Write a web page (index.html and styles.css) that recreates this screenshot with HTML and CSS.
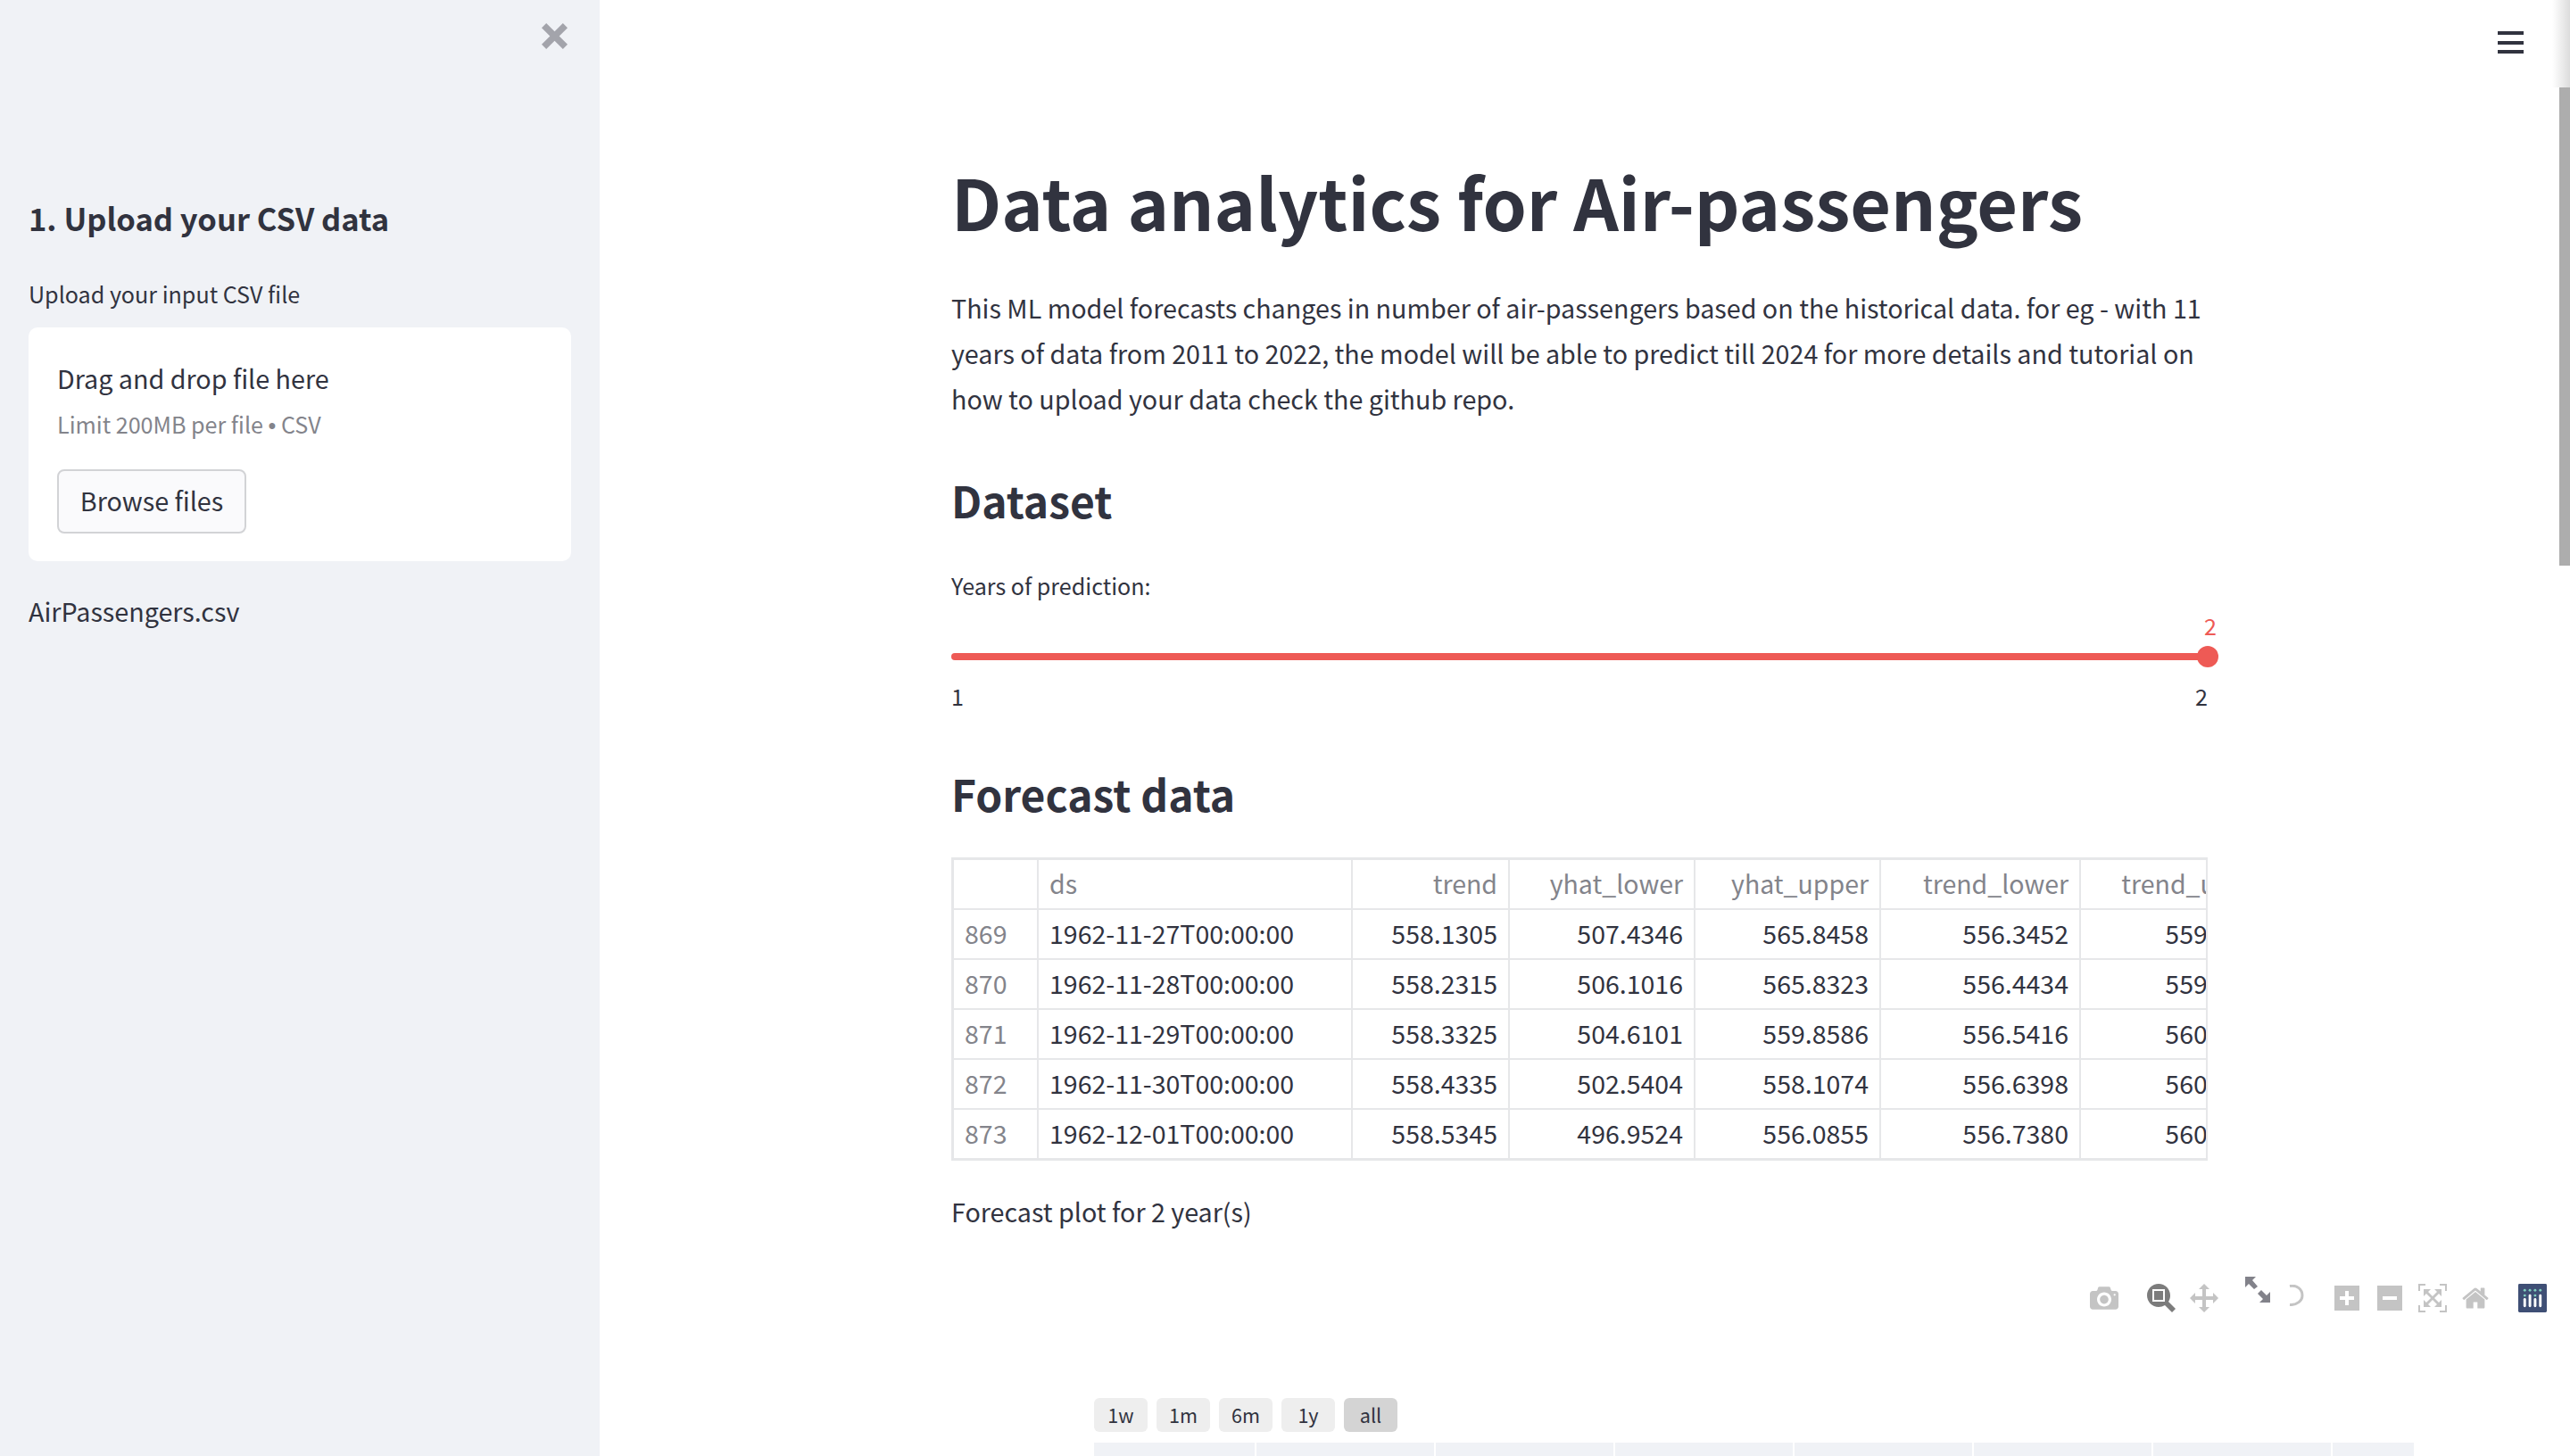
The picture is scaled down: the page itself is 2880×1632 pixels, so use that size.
FILE: index.html
```html
<!DOCTYPE html>
<html lang="en">
<head>
    <meta charset="UTF-8">
    <title>Data analytics for Air-passengers</title>
    <link rel="stylesheet" href="styles.css">
</head>
<body>

<aside class="sidebar">
    <div class="sidebar-top">
        <svg class="close-icon" viewBox="0 0 28 28"><path d="M0 5 L5 0 L14 9 L23 0 L28 5 L19 14 L28 23 L23 28 L14 19 L5 28 L0 23 L9 14 Z"/></svg>
    </div>
    <h4 class="side-title">1. Upload your CSV data</h4>
    <div class="side-label">Upload your input CSV file</div>
    <section class="dropzone">
        <div class="drop-title">Drag and drop file here</div>
        <div class="drop-limit">Limit 200MB per file <span class="dot">•</span> CSV</div>
        <button class="browse">Browse files</button>
    </section>
    <div class="file-name">AirPassengers.csv</div>
</aside>

<main class="main">
    <div class="menu-btn"><span></span><span></span><span></span></div>
    <div class="scroll-shade"></div>
    <div class="scroll-thumb"></div>

    <h1 class="title">Data analytics for Air-passengers</h1>
    <p class="intro">This ML model forecasts changes in number of air-passengers based on the historical data. for eg - with 11 years of data from 2011 to 2022, the model will be able to predict till 2024 for more details and tutorial on how to upload your data check the github repo.</p>

    <h3 class="section first">Dataset</h3>
    <div class="slider-label">Years of prediction:</div>
    <div class="slider">
        <div class="slider-value">2</div>
        <div class="slider-track"><div class="slider-knob"></div></div>
        <div class="slider-ticks"><span>1</span><span>2</span></div>
    </div>

    <h3 class="section">Forecast data</h3>
    <div class="table-wrap">
        <table class="data">
            <colgroup>
                <col class="c-idx"><col class="c-ds"><col class="c-trend"><col class="c-yl"><col class="c-yu"><col class="c-tl"><col class="c-tu">
            </colgroup>
            <thead>
                <tr><th></th><th class="left">ds</th><th>trend</th><th>yhat_lower</th><th>yhat_upper</th><th>trend_lower</th><th>trend_upper</th></tr>
            </thead>
            <tbody>
                <tr><th class="left">869</th><td class="left">1962-11-27T00:00:00</td><td>558.1305</td><td>507.4346</td><td>565.8458</td><td>556.3452</td><td>559.9146</td></tr>
                <tr><th class="left">870</th><td class="left">1962-11-28T00:00:00</td><td>558.2315</td><td>506.1016</td><td>565.8323</td><td>556.4434</td><td>559.9972</td></tr>
                <tr><th class="left">871</th><td class="left">1962-11-29T00:00:00</td><td>558.3325</td><td>504.6101</td><td>559.8586</td><td>556.5416</td><td>560.0798</td></tr>
                <tr><th class="left">872</th><td class="left">1962-11-30T00:00:00</td><td>558.4335</td><td>502.5404</td><td>558.1074</td><td>556.6398</td><td>560.1624</td></tr>
                <tr><th class="left">873</th><td class="left">1962-12-01T00:00:00</td><td>558.5345</td><td>496.9524</td><td>556.0855</td><td>556.7380</td><td>560.2450</td></tr>
            </tbody>
        </table>
    </div>
    <p class="plot-caption">Forecast plot for 2 year(s)</p>

    <div class="chart">
        <div class="modebar">
            <svg class="ico i-camera" viewBox="0 0 1000 1000"><path transform="matrix(1 0 0 -1 0 850)" d="m500 450c-83 0-150-67-150-150 0-83 67-150 150-150 83 0 150 67 150 150 0 83-67 150-150 150z m400 150h-120c-16 0-34 13-39 29l-31 93c-6 15-23 28-40 28h-340c-16 0-34-13-39-28l-31-94c-6-15-23-28-40-28h-120c-55 0-100-45-100-100v-450c0-55 45-100 100-100h800c55 0 100 45 100 100v450c0 55-45 100-100 100z m-400-550c-138 0-250 112-250 250 0 138 112 250 250 250 138 0 250-112 250-250 0-138-112-250-250-250z m365 380c-19 0-35 16-35 35 0 19 16 35 35 35 19 0 35-16 35-35 0-19-16-35-35-35z"/></svg>
            <svg class="ico i-zoom active" viewBox="0 0 1000 1000"><path transform="matrix(1 0 0 -1 0 850)" d="m1000-25l-250 251c40 63 63 138 63 218 0 224-182 406-407 406-224 0-406-182-406-406s183-406 407-406c80 0 155 22 218 62l250-250 125 125z m-812 250l0 438 437 0 0-438-437 0z m62 375l313 0 0-312-313 0 0 312z"/></svg>
            <svg class="ico i-pan" viewBox="0 0 1000 1000"><path transform="matrix(1 0 0 -1 0 850)" d="m1000 350l-187 188 0-125-250 0 0 250 125 0-188 187-187-187 125 0 0-250-250 0 0 125-188-188 186-187 0 125 252 0 0-250-125 0 187-188 188 188-125 0 0 250 250 0 0-126 187 188z"/></svg>
            <svg class="ico i-arrows" viewBox="0 0 28 29"><path d="M0 0 H12 L8 4 L14 11 L10 14 L4 8 L0 12 Z M28 29 H16 L20 25 L14 19 L18 15 L24 21 L28 17 Z"/></svg>
            <svg class="ico i-arc" viewBox="0 0 17 24"><path d="M1 1.5 C9 0 15 5 15 12 C15 18 9 23 1 22.5" fill="none" stroke-width="3"/></svg>
            <svg class="ico i-plus" viewBox="0 0 875 875"><path transform="matrix(1 0 0 -1 0 787)" d="m1 787l0-875 875 0 0 875-875 0z m687-500l-187 0 0-187-125 0 0 187-188 0 0 125 188 0 0 187 125 0 0-187 187 0 0-125z"/></svg>
            <svg class="ico i-minus" viewBox="0 0 875 875"><path transform="matrix(1 0 0 -1 0 787)" d="m0 788l0-876 875 0 0 876-875 0z m688-500l-500 0 0 125 500 0 0-125z"/></svg>
            <svg class="ico i-auto" viewBox="0 0 1000 1000"><path transform="matrix(1 0 0 -1 0 850)" d="m250 850l-187 0-63 0 0-62 0-188 63 0 0 188 187 0 0 62z m688 0l-188 0 0-62 188 0 0-188 62 0 0 188 0 62-62 0z m-875-938l0 188-63 0 0-188 0-62 63 0 187 0 0 62-187 0z m875 188l0-188-188 0 0-62 188 0 62 0 0 62 0 188-62 0z m-125 188l-1 0-93-94-156 156 156 156 92-93 2 0 0 250-250 0 0-2 93-92-156-156-156 156 94 92 0 2-250 0 0-250 0 0 93 93 157-156-157-156-93 94 0 0 0-250 250 0 0 0-94 93 156 157 156-157-93-93 0 0 250 0 0 250z"/></svg>
            <svg class="ico i-home" viewBox="0 0 929 800"><path transform="matrix(1 0 0 -1 0 750)" d="m786 296v-267q0-15-11-26t-25-10h-214v214h-143v-214h-214q-15 0-25 10t-11 26v267q0 1 0 2t0 2l321 264 321-264q1-1 1-4z m124 39l-34-41q-5-5-12-6h-2q-7 0-12 3l-386 322-386-322q-7-4-13-4-7 2-12 7l-35 41q-4 5-3 13t6 12l401 334q18 15 42 15t43-15l136-114v109q0 8 5 13t13 5h107q8 0 13-5t5-13v-227l122-102q5-5 6-12t-4-13z"/></svg>
            <svg class="i-logo" viewBox="0 0 132 132">
                <rect width="132" height="132" rx="6" fill="#3f4f75"/>
                <g fill="#80cfbe"><circle cx="30" cy="30" r="6"/><circle cx="54" cy="30" r="6"/><circle cx="78" cy="30" r="6"/><circle cx="102" cy="30" r="6"/><circle cx="30" cy="54" r="6"/><circle cx="78" cy="54" r="6"/></g>
                <g fill="#fff"><rect x="24" y="66" width="12" height="42" rx="6"/><rect x="48" y="48" width="12" height="60" rx="6"/><rect x="72" y="66" width="12" height="42" rx="6"/><rect x="96" y="48" width="12" height="60" rx="6"/></g>
            </svg>
        </div>
        <div class="range-btns">
            <div class="range">1w</div>
            <div class="range">1m</div>
            <div class="range">6m</div>
            <div class="range">1y</div>
            <div class="range on">all</div>
        </div>
        <div class="plot-table">
            <div class="c-a"></div><div class="c-b"></div><div class="c-b"></div><div class="c-b"></div><div class="c-b"></div><div class="c-b"></div><div class="c-b"></div><div class="c-c"></div>
        </div>
    </div>
</main>

</body>
</html>
```

FILE: styles.css
```css
html, body {
    margin: 0;
    height: 100%;
}
body {
    display: flex;
    height: 1632px;
    overflow: hidden;
    font-family: "Noto Sans CJK SC", "Noto Sans", sans-serif;
    color: #31333f;
    background: white;
    font-size: 28.7px;
}

/* sidebar */
.sidebar {
    width: 672px;
    flex: none;
    box-sizing: border-box;
    padding: 0 32px;
    background-color: #f0f2f6;
}
.sidebar-top {
    height: 204px;
    display: flex;
    justify-content: flex-end;
    align-items: flex-start;
    padding: 26px 4px 0 0;
    box-sizing: border-box;
}
.close-icon {
    width: 29px;
    height: 29px;
    fill: #a3a4ab;
}
.side-title {
    margin: 0;
    font-size: 34.5px;
    font-weight: 700;
    line-height: 80px;
}
.side-label {
    margin-top: 25px;
    font-size: 25.1px;
    line-height: 40px;
}
.dropzone {
    margin-top: 18px;
    height: 262px;
    box-sizing: border-box;
    padding: 31px 32px;
    background: white;
    border-radius: 10px;
}
.drop-title {
    line-height: 52px;
}
.drop-limit {
    font-size: 25.1px;
    line-height: 40px;
    margin-top: 5px;
    color: #83848b;
}
.dot {
    font-family: "Liberation Sans", sans-serif;
}
.browse {
    display: block;
    margin-top: 29px;
    width: 212px;
    height: 72px;
    padding: 0 0 3px;
    font: inherit;
    color: #31333f;
    background: #fafafc;
    border: 2px solid #d2d3d6;
    border-radius: 8px;
}
.file-name {
    margin-top: 30px;
    line-height: 52px;
}

/* main column */
.main {
    position: relative;
    flex: 1;
    min-width: 0;
    padding-left: 394px;
    overflow: hidden;
}
.menu-btn {
    position: absolute;
    top: 35px;
    left: 2127px;
    width: 29px;
}
.menu-btn span {
    display: block;
    height: 4px;
    margin-bottom: 6.5px;
    background: #31333f;
}
.scroll-shade {
    position: absolute;
    top: 0;
    right: 0;
    width: 20px;
    height: 98px;
    background: linear-gradient(to right, white, #dcdcdc);
}
.scroll-thumb {
    position: absolute;
    top: 98px;
    right: 0;
    width: 12px;
    height: 536px;
    background: #adadad;
}
.title {
    margin: 166px 0 0;
    font-size: 78.9px;
    font-weight: 700;
    line-height: 118px;
    white-space: nowrap;
}
.intro {
    width: 1408px;
    margin: 35px 0 0;
    line-height: 51.2px;
}
.section {
    margin: 50px 0 0;
    font-size: 48px;
    font-weight: 700;
    line-height: 78px;
}
.section.first {
    margin-top: 48px;
}
.slider-label {
    margin-top: 37px;
    font-size: 25.1px;
    line-height: 40px;
}

/* slider */
.slider {
    position: relative;
    width: 1408px;
    margin-top: 14px;
    padding-top: 42px;
}
.slider-value {
    position: absolute;
    top: -9px;
    right: -10px;
    font-size: 25.1px;
    line-height: 40px;
    color: #ee5a55;
}
.slider-track {
    position: relative;
    height: 8px;
    background: #ee5a55;
    border-radius: 4px;
}
.slider-knob {
    position: absolute;
    right: -12px;
    top: -8px;
    width: 24px;
    height: 24px;
    border-radius: 50%;
    background: #ee5a55;
}
.slider-ticks {
    display: flex;
    justify-content: space-between;
    margin-top: 20px;
    font-size: 25.1px;
    line-height: 40px;
}

/* forecast table */
.table-wrap {
    width: 1408px;
    margin-top: 33px;
    overflow: hidden;
    box-sizing: border-box;
    border: 2px solid #e6e7e9;
}
table.data {
    border-collapse: collapse;
    table-layout: fixed;
    width: 1490px;
    font-size: 28.5px;
    margin: -1px 0 -1px -1px;
}
.c-idx { width: 95px; }
.c-ds { width: 352px; }
.c-trend { width: 176px; }
.c-yl { width: 208px; }
.c-yu { width: 208px; }
.c-tl { width: 224px; }
.c-tu { width: 227px; }
.data th, .data td {
    height: 52px;
    padding: 0 12px 2px;
    border: 2px solid #e6e7e9;
    text-align: right;
    font-weight: 400;
    white-space: nowrap;
    line-height: 52px;
}
.data th {
    color: #83848b;
}
.data .left {
    text-align: left;
}
.plot-caption {
    margin: 31px 0 0;
    line-height: 52px;
}

/* plotly chart */
.chart {
    width: 1800px;
    margin-top: 47px;
}
.modebar {
    display: flex;
    align-items: flex-start;
    height: 136px;
}
.ico {
    display: block;
    flex: none;
    fill: #c4c4c4;
    stroke: none;
}
.ico.active {
    fill: #7c7c7c;
}
.i-camera { width: 32px; height: 32px; margin: 8px 0 0 1276px; }
.i-zoom { width: 32px; height: 32px; margin: 8px 0 0 32px; }
.i-pan { width: 32px; height: 32px; margin: 8px 0 0 16px; }
.i-arrows { width: 28px; height: 29px; margin: 0 0 0 30px; fill: #82828a; }
.i-arc { width: 17px; height: 24px; margin: 9px 0 0 21px; stroke: #c4c4c4; }
.i-plus { width: 28px; height: 28px; margin: 10px 0 0 34px; }
.i-minus { width: 28px; height: 28px; margin: 10px 0 0 20px; }
.i-auto { width: 32px; height: 32px; margin: 8px 0 0 18px; }
.i-home { width: 30px; height: 26px; margin: 11px 0 0 17px; }
.i-logo { width: 32px; height: 32px; flex: none; margin: 8px 0 0 33px; }
.range-btns {
    display: flex;
    gap: 10px;
    margin-left: 160px;
}
.range {
    width: 60px;
    height: 38px;
    border-radius: 6px;
    background: #eeeeee;
    font-size: 21.6px;
    line-height: 38px;
    text-align: center;
}
.range.on {
    background: #d4d4d4;
}
.plot-table {
    display: flex;
    gap: 2px;
    height: 30px;
    margin: 12px 0 0 160px;
}
.plot-table div {
    height: 30px;
    background: #f0f2f6;
}
.c-a { width: 180px; }
.c-b { width: 199px; }
.c-c { width: 91px; }
```
